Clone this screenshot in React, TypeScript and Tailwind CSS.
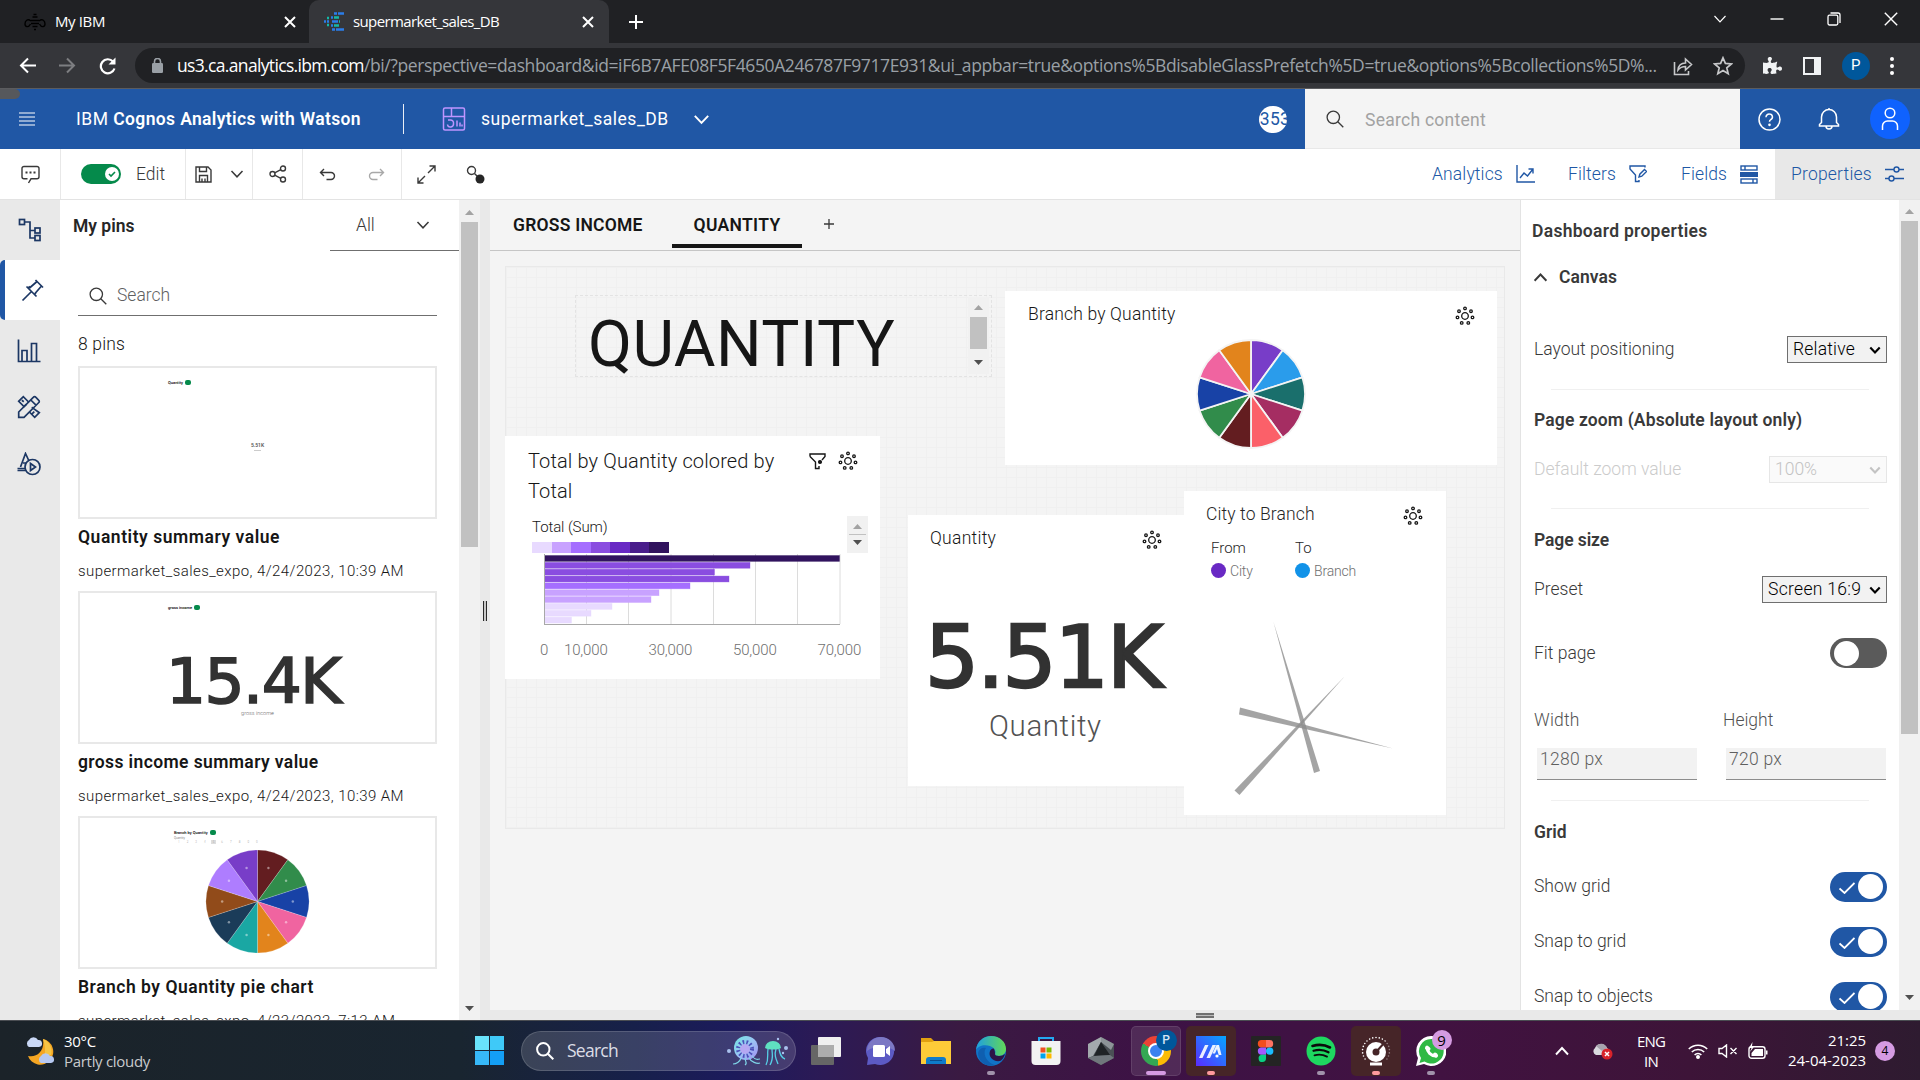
import type { ReactNode } from "react";
import { FaPuzzlePiece } from "react-icons/fa";

type IconProps = { className?: string; box?: string; children: ReactNode; w?: number };

function Icon({ className = "w-5 h-5", box = "0 0 20 20", w = 1.4, children }: IconProps) {
  return (
    <svg className={`shrink-0 ${className}`} viewBox={box} fill="none" stroke="currentColor" strokeWidth={w}>
      {children}
    </svg>
  );
}

const ChevronDown = ({ className = "w-[14px] h-[14px]", w = 1.5 }: { className?: string; w?: number }) => (
  <Icon className={className} box="0 0 14 14" w={w}><path d="M1.5 4 L7 9.8 L12.5 4" /></Icon>
);

const Magnifier = ({ className = "w-[18px] h-[18px]", w = 1.3 }: { className?: string; w?: number }) => (
  <Icon className={className} box="0 0 18 18" w={w}><circle cx="7.3" cy="7.3" r="6.2" /><path d="M11.8 11.8 L17.3 17.3" /></Icon>
);

const Arrow = ({ up = false, dark = false }: { up?: boolean; dark?: boolean }) => (
  <svg className="w-[9px] h-[5px] shrink-0" viewBox="0 0 9 5" fill={dark ? "#505050" : "#a3a3a3"}>
    <path d={up ? "M0 5 L4.5 0 L9 5Z" : "M0 0 L9 0 L4.5 5Z"} />
  </svg>
);

const RING = [[0, -7.6], [6, -4.8], [7.5, 1.4], [3.3, 6.9], [-3.3, 6.9], [-7.5, 1.4], [-6, -4.8]];
const Insights = () => (
  <Icon className="w-5 h-5 text-[#161616]" box="-10 -10 20 20" w={1.3}>
    <circle r="3.3" />
    {RING.map(([x, y]) => <circle key={`${x}${y}`} cx={x} cy={y} r="1.3" />)}
  </Icon>
);

function Pie({ colors, className, stroke, w, dots }: { colors: string[]; className: string; stroke: string; w: number; dots?: boolean }) {
  const step = (Math.PI * 2) / colors.length;
  const at = (a: number, r: number) => `${(Math.sin(a) * r).toFixed(2)} ${(-Math.cos(a) * r).toFixed(2)}`;
  return (
    <svg className={className} viewBox="-55 -55 110 110">
      {colors.map((c, i) => (
        <path key={c} d={`M0 0 L${at(i * step, 54)} A54 54 0 0 1 ${at((i + 1) * step, 54)}Z`} fill={c} stroke={stroke} strokeWidth={w} />
      ))}
      {dots && colors.map((c, i) => (
        <circle key={c} cx={Math.sin((i + 0.5) * step) * 37} cy={-Math.cos((i + 0.5) * step) * 37} r="1.3" fill="#fff" opacity=".45" />
      ))}
    </svg>
  );
}

function BrowserChrome() {
  return (
    <header className="bg-[#202124] font-['Open_Sans'] font-normal text-white">
      <div className="flex h-[43px] items-stretch">
        <div className="flex w-[309px] items-center pl-[24px] pr-[12px]">
          <Icon className="w-[22px] h-[18px] text-black" box="0 0 22 18" w={1.4}>
            <path d="M8.500 4h5M7 7.500h8M7 10.500h8M8.500 13.500h5M10 16.500h2M9.500 1.500h3" />
            <path d="M7 8 C3.500 5 1 8 1 11s3.500 4 5.500 0M15 8c3.500-3 6 0 6 3s-3.500 4-5.500 0" />
          </Icon>
          <span className="ml-[9px] text-[15px] tracking-[-0.38px]">My IBM</span>
          <Icon className="ml-auto w-[14px] h-[14px]" box="0 0 14 14" w={2}><path d="M2 2 L12 12 M12 2 L2 12" /></Icon>
        </div>
        <div className="flex w-[300px] items-center rounded-t-[10px] bg-[#35363a] pl-[15px] pr-[14px]">
          <Icon className="w-[21px] h-[19px]" box="0 0 21 19" w={2.4}>
            <path stroke="#2b7de9" d="M10 1.5h3M14 1.5h6M7 5.5h2M3 9.500h2M0 9.500h2M7 13.500h2M8 17.500h3M12 17.500h8M8 9.500h6" />
            <path stroke="#14b8a6" d="M10 5.500h5M3 6h2M3 13h2M10 13.500h5M15 9.500h1" />
          </Icon>
          <span className="ml-[8px] text-[15px] tracking-[-0.63px]">supermarket_sales_DB</span>
          <Icon className="ml-auto w-[14px] h-[14px]" box="0 0 14 14" w={2}><path d="M2 2 L12 12 M12 2 L2 12" /></Icon>
        </div>
        <div className="flex items-center pl-[19px]">
          <Icon className="w-4 h-4" box="0 0 16 16" w={2}><path d="M8 1v14M1 8h14" /></Icon>
        </div>
        <div className="ml-auto flex items-center gap-[43px] pr-[22px] pb-[6px]">
          <ChevronDown w={1.2} />
          <Icon className="w-[14px] h-[14px]" box="0 0 14 14" w={1.4}><path d="M0.500 7h13" /></Icon>
          <Icon className="w-[14px] h-[14px]" box="0 0 14 14" w={1.3}><rect x="1" y="3.200" width="9.800" height="9.800" rx="1.500" /><path d="M3.500 1h7.500a2 2 0 0 1 2 2v8" /></Icon>
          <Icon className="w-[14px] h-[14px]" box="0 0 14 14" w={1.4}><path d="M.8 .8 L13.200 13.200 M13.200 .8 L.8 13.200" /></Icon>
        </div>
      </div>
      <div className="flex h-[46px] items-center border-b border-[#5b5c5f] bg-[#35363a]">
        <div className="flex w-[135px] items-center gap-[23px] pl-[19px]">
          <Icon className="w-[17px] h-[17px]" box="0 0 17 17" w={2}><path d="M17 8.500H2M9 1.500 L2 8.500 L9 15.500" /></Icon>
          <Icon className="w-[17px] h-[17px] text-[#7d7e81]" box="0 0 17 17" w={2}><path d="M0 8.500h15M8 1.500 L15 8.500 L8 15.500" /></Icon>
          <Icon className="w-[18px] h-[18px]" box="0 0 18 18" w={2.200}><path d="M15.500 11.500A7 7 0 1 1 14 4.500" /><path d="M16.500 0.500v7h-7z" fill="#fff" stroke="none" /></Icon>
        </div>
        <div className="flex h-[35px] w-[1610px] items-center rounded-full bg-[#202124] pl-[17px] pr-[12px] text-[17.500px]">
          <svg className="h-[15px] w-[11px]" viewBox="0 0 11 15" fill="#9aa0a6"><rect y="5" width="11" height="10" rx="1.200" /><path d="M2.500 6V3.500a3 3 0 0 1 6 0V6" stroke="#9aa0a6" strokeWidth="1.600" fill="none" /></svg>
          <span className="ml-[14px] tracking-[-0.66px]">us3.ca.analytics.ibm.com</span>
          <span className="whitespace-nowrap tracking-[-0.39px] text-[#9aa0a6]">/bi/?perspective=dashboard&amp;id=iF6B7AFE08F5F4650A246787F9717E931&amp;ui_appbar=true&amp;options%5BdisableGlassPrefetch%5D=true&amp;options%5Bcollections%5D%...</span>
          <Icon className="ml-auto w-[20px] h-[20px] text-[#c7c8ca]" w={1.600}><path d="M1.500 6v12.500h14V15M5 14c.5-5 3.500-7 7.500-7V3l6 5.500-6 5.500v-3.500C9 10.500 7 11.500 5 14z" /></Icon>
          <Icon className="ml-[20px] w-[20px] h-[20px] text-[#c7c8ca]" w={1.700}><path d="M10 1.800l2.400 5.600 6 .5-4.600 4 1.400 5.900L10 14.600l-5.200 3.200 1.400-5.900-4.600-4 6-.5z" /></Icon>
        </div>
        <div className="flex flex-1 items-center justify-between pl-[18px] pr-[26px]">
          <FaPuzzlePiece className="h-[19px] w-[19px] text-[#f1f3f4]" />
          <span className="ml-[1px] h-[18px] w-[18px] border-[2.500px] border-r-[7px] border-[#f1f3f4]" />
          <span className="flex h-[28px] w-[28px] items-center justify-center rounded-full bg-[#00579b] font-['Roboto'] text-[15px]">P</span>
          <span className="flex flex-col gap-[3px]"><i className="h-1 w-1 rounded-full bg-white" /><i className="h-1 w-1 rounded-full bg-white" /><i className="h-1 w-1 rounded-full bg-white" /></span>
        </div>
      </div>
    </header>
  );
}

function AppBar() {
  return (
    <div className="flex h-[60px] items-center bg-[#2057a5] text-[17.500px] font-normal text-white">
      <div className="relative flex w-[76px] items-center self-stretch pl-[19px]">
        <span className="absolute left-0 top-0 h-[10px] w-5 rounded-r-[5px] bg-[#56585c]" />
        <Icon className="w-4 h-[14px]" box="0 0 16 14" w={1.200}><path d="M0 1h16M0 5h16M0 9h16M0 13h16" /></Icon>
      </div>
      <span className="w-[327px] whitespace-nowrap"><span className="tracking-[0.500px]">IBM </span><b className="font-semibold tracking-[0.360px]">Cognos Analytics with Watson</b></span>
      <span className="h-[30px] w-px bg-white/90" />
      <Icon className="ml-[38px] h-[24px] w-[24px] text-[#be95ff]" box="0 0 24 24" w={1.500}>
        <rect x="1.500" y="1" width="21" height="22" rx="1.500" /><path d="M1.500 9.500h21M9.500 1v8.500M6 13h2.500a3 3 0 0 1 3 3.500 3 3 0 0 1-6 1M15 19.500v-6M18 19.500v-4M20 19.500v-2" />
      </Icon>
      <span className="ml-[15px] tracking-[0.510px]">supermarket_sales_DB</span>
      <ChevronDown className="ml-[24px] h-[17px] w-[17px]" w={1.600} />
      <span className="ml-auto flex h-[27px] w-[28px] items-center justify-center overflow-hidden rounded-full bg-white tracking-[0.300px] text-[#2057a5]"><span className="ml-[4px]">353</span></span>
      <div className="ml-[18px] flex w-[435px] items-center self-stretch border-b border-[#e8e8e8] bg-[#f4f4f4] pl-[21px]">
        <Magnifier className="h-[18px] w-[18px] text-[#393939]" />
        <span className="ml-[21px] pt-[3px] tracking-[0.260px] text-[#a2a2a2]">Search content</span>
      </div>
      <div className="flex w-[180px] items-center pl-[18px]">
        <Icon className="h-[23px] w-[23px]" box="0 0 23 23" w={1.500}><circle cx="11.500" cy="11.500" r="10.500" /><path d="M8 9.200a3.200 3.200 0 0 1 3.500-3.200 3 3 0 0 1 1 5.800c-.8.400-1 .8-1 2" /><circle cx="11.500" cy="16.800" r=".6" fill="#fff" /></Icon>
        <Icon className="ml-[37px] h-[24px] w-[22px]" box="0 0 22 24" w={1.500}><path d="M11 1v2M3.500 15.500V10a7.500 7.500 0 0 1 15 0v5.500l2 2V19H1.500v-1.500zM8 19a3 3 0 0 0 6 0" /></Icon>
        <span className="ml-[30px] flex h-[40px] w-[40px] items-center justify-center rounded-full bg-[#0f62fe]">
          <Icon className="h-[24px] w-[18px]" box="0 0 18 24" w={1.500}><circle cx="9" cy="6" r="4.800" /><path d="M1.500 23v-4a5 5 0 0 1 5-5h5a5 5 0 0 1 5 5v4" /></Icon>
        </span>
      </div>
    </div>
  );
}

function Toolbar() {
  return (
    <div className="flex h-[51px] items-stretch border-b border-[#e3e3e3] bg-white text-[17.500px] text-[#393939]">
      <div className="flex w-[61px] items-center justify-center border-r border-[#e8e8e8]">
        <Icon className="h-[19px] w-[19px]" box="0 0 19 19" w={1.400}><path d="M7.500 18 L10 13.800h6a2 2 0 0 0 2-2V3.500a2 2 0 0 0-2-2H3a2 2 0 0 0-2 2v8.300a2 2 0 0 0 2 2h3.500" /><path d="M4.500 7.600h2M8.500 7.600h2M12.500 7.600h2" strokeWidth="2" /></Icon>
      </div>
      <div className="flex w-[125px] items-center border-r border-[#e8e8e8] pl-[20px]">
        <span className="flex h-[20px] w-[40px] items-center justify-end rounded-full bg-[#058a4b] pr-[2px]">
          <span className="flex h-[14px] w-[14px] items-center justify-center rounded-full bg-white"><Icon className="h-2 w-2 text-[#058a4b]" box="0 0 8 8" w={1.600}><path d="M1 4l2 2 4-4" /></Icon></span>
        </span>
        <span className="ml-[15px]">Edit</span>
      </div>
      <div className="flex w-[67px] items-center gap-[18px] border-r border-[#e8e8e8] pl-[9px]">
        <Icon className="h-[17px] w-[17px]" box="0 0 17 17"><path d="M1 1h12l3 3v12H1zM4.500 1v4.500h7V1M4.500 16v-6.500h8V16M7 12.500v3.500M10 12.500v3.500" /></Icon>
        <ChevronDown className="h-[14px] w-[14px]" />
      </div>
      <div className="flex w-[50px] items-center justify-center border-r border-[#e8e8e8]">
        <Icon className="h-[18px] w-[18px]" box="0 0 18 18"><circle cx="3.500" cy="9" r="2.500" /><circle cx="14" cy="3.500" r="2.500" /><circle cx="14" cy="14.500" r="2.500" /><path d="M5.700 7.800 L11.800 4.700M5.700 10.200 L11.800 13.300" /></Icon>
      </div>
      <div className="flex w-[99px] items-center gap-[32px] border-r border-[#e8e8e8] pl-[16px]">
        <Icon className="h-[17px] w-[17px]" box="0 0 17 17"><path d="M5 3 L1.500 6.500 L5 10M1.500 6.500H12a3.500 3.500 0 0 1 3.500 3.500 3.500 3.500 0 0 1-3.500 3.500H7.500" /></Icon>
        <Icon className="h-[17px] w-[17px] text-[#a8a8a8]" box="0 0 17 17"><path d="M12 3 L15.500 6.500 L12 10M15.500 6.500H5A3.500 3.500 0 0 0 1.500 10 3.500 3.500 0 0 0 5 13.500h4.500" /></Icon>
      </div>
      <div className="flex items-center gap-[30px] pl-[15px]">
        <Icon className="h-[19px] w-[19px]" box="0 0 19 19"><path d="M12.500 1H18v5.500M18 1 L11 8M1 12.500V18h5.500M1 18 L8 11" /></Icon>
        <Icon className="h-[19px] w-[19px]" box="0 0 19 19"><circle cx="5.500" cy="5.500" r="4" /><path d="M8.500 8.500l3 3" /><circle cx="14" cy="14" r="4.500" fill="#262626" stroke="none" /></Icon>
      </div>
      <div className="ml-auto flex items-center text-[#2057a5]">
        <span className="w-[84px] tracking-[0.130px]">Analytics</span>
        <Icon className="h-[18px] w-[19px]" box="0 0 19 18"><path d="M1 0v17h18M4 13l4-5 3.500 3 5.500-7M12.500 4H17v4.500" /></Icon>
        <span className="ml-[33px] w-[61px] tracking-[0.120px]">Filters</span>
        <Icon className="h-[18px] w-[18px]" box="0 0 18 18"><path d="M16 2.500V1H1v3l5.500 6v6.500h3.500V15M10 12l.8-2.800 4.700-4.700 2 2-4.700 4.700z" /></Icon>
        <span className="ml-[34px] w-[59px] tracking-[0.110px]">Fields</span>
        <Icon className="h-[19px] w-[18px]" box="0 0 18 19"><rect x="1" y="1" width="16" height="4" /><rect x="1" y="14" width="16" height="4" /><rect x="0" y="7" width="18" height="5" fill="currentColor" stroke="none" /><path d="M5 1v4M13 14v4" /></Icon>
        <div className="ml-[17px] flex w-[145px] items-center self-stretch bg-[#e8e8e8] pl-[16px]">
          <span className="w-[94px] tracking-[0.200px]">Properties</span>
          <Icon className="h-[18px] w-[19px]" box="0 0 19 18"><path d="M0 4.500h9M14 4.500h5M0 13.500h4M9 13.500h10" /><circle cx="11.500" cy="4.500" r="2.500" /><circle cx="6.500" cy="13.500" r="2.500" /></Icon>
        </div>
      </div>
    </div>
  );
}

function Rail() {
  return (
    <nav className="flex w-[60px] shrink-0 flex-col bg-[#e9e9e9] text-[#1c3764]">
      <div className="flex h-[60px] items-center justify-center">
        <Icon className="h-[24px] w-[24px]" box="0 0 24 24" w={1.700}><rect x="1.500" y="1.500" width="5" height="5" /><rect x="17" y="10" width="5" height="5" /><rect x="17" y="17.500" width="5" height="5" /><path d="M6.500 4H12v16h5M12 12.500h5" /></Icon>
      </div>
      <div className="flex h-[60px] items-center justify-center rounded-l-[5px] border-l-[5px] border-[#2057a5] bg-white">
        <Icon className="h-[24px] w-[24px]" box="0 0 24 24" w={1.700}><path d="M14.500 2 L22 9.500M16 3.500l-7.500 6.500M20.500 8 L14 15.500M5.500 8.500 L15.500 18.500M7 10l2-1.500M13.500 16.500l1.500-1.500M10 14 L1.500 22.500" /></Icon>
      </div>
      <div className="flex h-[61px] items-center justify-center pr-[2px]">
        <Icon className="h-[24px] w-[24px]" box="0 0 24 24" w={1.700}><path d="M1.500 0.500v22h22M5 22.500v-11h5v11M14.500 22.500V4.500h5v18" /></Icon>
      </div>
      <div className="flex h-[52px] items-center justify-center pr-[2px]">
        <Icon className="h-[24px] w-[24px]" box="0 0 24 24" w={1.700}>
          <path d="M16.500 2.200a1.500 1.500 0 0 1 2.200 0l3.100 3.100a1.500 1.500 0 0 1 0 2.200L7 22.300H1.700V17zM13.800 5l5.200 5.200" />
          <path d="M9.300 9.300L7 11.600 1.700 6.300l4.600-4.600 5.300 5.300M6.800 6.800l-2 -1.500 M14.700 12.300l.2.100 7.400 5.300-4.600 4.600-5.300-5.300M17.300 16.600l-2.200 2.200" />
        </Icon>
      </div>
      <div className="flex h-[62px] items-center justify-center pr-[2px]">
        <Icon className="h-[24px] w-[24px]" box="0 0 24 24" w={1.700}><path d="M3.500 15 L8.500 1.500 L12 9M6 11h3M0.500 18.500h9M.5 16.500h8" /><circle cx="15.500" cy="15" r="7.500" /><path d="M13.500 11.500v7l5-3.500z" /></Icon>
      </div>
    </nav>
  );
}

function Pin({ title, sub, titleClass, children }: { title: string; sub: string; titleClass: string; children: ReactNode }) {
  return (
    <div className="h-[225px] shrink-0">
      <div className="relative h-[153px] border-2 border-[#e8e8e8]">{children}</div>
      <div className={`flex h-[36px] items-center whitespace-nowrap text-[17.500px] font-semibold text-[#161616] ${titleClass}`}>{title}</div>
      <div className="flex h-[32px] items-center whitespace-nowrap text-[15px] tracking-[0.420px] text-[#161616]">{sub}</div>
    </div>
  );
}

const Live = () => <i className="h-[5px] w-[6px] rounded-[2px] bg-[#058a4b]" />;

function PinsPanel() {
  return (
    <aside className="flex w-[420px] shrink-0 overflow-hidden bg-white">
      <div className="flex w-[399px] flex-col">
        <div className="flex h-[51px] shrink-0 items-stretch justify-between pl-[13px]">
          <h2 className="flex items-center pt-px text-[17.500px] font-semibold text-[#262626]">My pins</h2>
          <div className="flex w-[129px] items-center border-b border-[#6f6f6f] pl-[26px] text-[17.500px] text-[#393939]">All<ChevronDown className="ml-[41px] h-[14px] w-[14px]" /></div>
        </div>
        <div className="ml-[18px] flex w-[359px] flex-col">
          <div className="mt-[25px] flex h-[40px] shrink-0 items-center border-b border-[#6f6f6f] pl-[11px] text-[17.500px] text-[#5f5f5f]">
            <Magnifier className="h-[18px] w-[18px] text-[#393939]" /><span className="ml-[10px]">Search</span>
          </div>
          <div className="flex h-[50px] shrink-0 items-center pt-[6px] text-[17.500px] tracking-[0.170px] text-[#161616]">8 pins</div>
          <Pin title="Quantity summary value" titleClass="tracking-[0.540px]" sub="supermarket_sales_expo, 4/24/2023, 10:39 AM">
            <div className="ml-[88px] mt-[12px] flex items-center gap-[2px] text-[4px] font-medium leading-[5px]">Quantity <Live /></div>
            <div className="mt-[56px] text-center text-[5px] font-semibold leading-[9px] text-[#555]">5.51K</div>
            <div className="mx-auto h-px w-[7px] bg-[#ccc]" />
          </Pin>
          <Pin title="gross income summary value" titleClass="tracking-[0.390px]" sub="supermarket_sales_expo, 4/24/2023, 10:39 AM">
            <div className="ml-[88px] mt-[12px] flex items-center gap-[2px] text-[4px] font-medium leading-[5px]">gross income <Live /></div>
            <div className="-ml-[9px] mt-[44px] text-center font-['DejaVu_Sans'] text-[63px] font-normal leading-[56px] tracking-[-1.500px] text-[#323232] [-webkit-text-stroke:1.700px_#323232]">15.4K</div>
            <div className="-mt-[1px] text-center text-[5.500px] leading-[8px] text-[#666]">gross income</div>
          </Pin>
          <Pin title="Branch by Quantity pie chart" titleClass="tracking-[0.510px]" sub="supermarket_sales_expo, 4/23/2023, 7:13 AM">
            <div className="ml-[94px] mt-[12px] flex items-center gap-[2px] text-[4px] font-medium leading-[5px]">Branch by Quantity <Live /></div>
            <div className="ml-[94px] mt-[1px] text-[3px] leading-[4px] text-[#555]">Quantity</div>
            <div className="ml-[98px] flex gap-[7px] text-[3px] leading-[4px] text-[#999]">{[..."1234567890"].map(n => <span key={n} className={n === "5" ? "-mx-[2px] bg-[#ddd] px-[2px]" : ""}>{n}</span>)}</div>
            <Pie className="mx-auto mt-[5px] h-[105px] w-[105px]" stroke="#ffffff55" w={0.600} dots
              colors={["#631d20", "#318c4b", "#1842a6", "#f064a0", "#e2841c", "#1aa7a3", "#1b3c59", "#914b1a", "#ae7dff", "#783dc8"]} />
          </Pin>
        </div>
      </div>
      <div className="flex w-[21px] flex-col items-center bg-[#f1f1f1] pt-[10px] pb-[9px]">
        <Arrow up />
        <span className="mt-[7px] h-[325px] w-[17px] bg-[#c1c1c1]" />
        <span className="flex-1" />
        <Arrow dark />
      </div>
    </aside>
  );
}

const BARS: [number, string][] = [[295, "#31135e"], [205.500, "#8a4de0"], [170, "#8a4de0"], [184.500, "#8a4de0"], [145.500, "#a56eff"], [114.500, "#c8a2ff"], [106.500, "#c8a2ff"], [67.500, "#e8daff"], [46.500, "#e8daff"], [27, "#e8daff"]];

function TotalCard() {
  return (
    <section className="absolute left-[15px] top-[185px] h-[243px] w-[375px] bg-white">
      <div className="flex items-start pl-[23px] pt-[10px]">
        <h3 className="w-[263px] text-[20px] leading-[30px] tracking-[0.130px] text-[#161616]">Total by Quantity colored by Total</h3>
        <Icon className="ml-[18px] mt-[7px] h-[17px] w-[17px] text-[#161616]" box="0 0 17 17"><path d="M1 3.500V1h15v2.500L13 7M1 3.500 L6.500 9v6.500h3.500V13" /><circle cx="11" cy="9" r="1.400" fill="currentColor" /></Icon>
        <span className="ml-[12px] mt-[5px]"><Insights /></span>
      </div>
      <div className="flex justify-between pl-[27px] pr-[12px]">
        <div>
          <div className="mt-[12px] h-[18px] text-[15px] leading-[18px] tracking-[-0.100px] text-[#161616]">Total (Sum)</div>
          <div className="mt-[6px] flex h-[11px] w-[137px]">
            {["#e8daff", "#c8a2ff", "#a56eff", "#8a4de0", "#6929c4", "#491d8b", "#31135e"].map(c => <i key={c} className="flex-1" style={{ backgroundColor: c }} />)}
          </div>
        </div>
        <div className="mt-[10px] flex h-[37px] w-[21px] flex-col items-center justify-between bg-[#f1f1f1] py-[8px]"><Arrow up /><i className="h-px w-[17px] bg-[#c1c1c1]" /><Arrow dark /></div>
      </div>
      <svg className="ml-[39px] mt-[1px] block h-[72px] w-[297px]" viewBox="0 0 297 72">
        {[42, 84, 126.500, 169, 211, 253, 295.500].map(x => <path key={x} d={`M${x + 0.500} 0V70`} stroke="#dcdcdc" />)}
        {BARS.map(([w, c], i) => <rect key={i} x="0.500" y={1.500 + i * 6.850} width={w} height="5.900" fill={c} stroke={c} strokeOpacity=".5" strokeWidth=".7" />)}
        <path d="M0.500 0V70M0 70.500H296" stroke="#a8a8a8" />
      </svg>
      <div className="mt-[14px] flex text-[15px] leading-[20px] tracking-[-0.150px] text-[#6f6f6f]">
        <span className="ml-[35px] w-[24px]">0</span><span className="w-[84.500px]">10,000</span><span className="w-[84.500px]">30,000</span><span className="w-[84.500px]">50,000</span><span>70,000</span>
      </div>
    </section>
  );
}

function Canvas() {
  return (
    <main className="relative flex w-[1030px] shrink-0 flex-col overflow-hidden bg-[#f4f4f4]">
      <div className="flex h-[51px] shrink-0 items-stretch border-b border-[#c6c6c6] pl-[23px] text-[17.500px] font-semibold text-[#161616]">
        <span className="flex w-[159px] items-center tracking-[0.230px]">GROSS INCOME</span>
        <span className="mb-[2px] flex w-[130px] items-center justify-center border-b-4 border-[#161616] pt-[6px] tracking-[0.330px]">QUANTITY</span>
        <Icon className="ml-[22px] mt-[19px] h-[10px] w-[10px] text-[#393939]" box="0 0 10 10" w={1.300}><path d="M5 0v10M0 5h10" /></Icon>
      </div>
      <div className="relative flex-1">
        <div className="absolute left-[15px] top-[15px] h-[563px] w-[1000px] border border-[#e9e9e9] bg-[linear-gradient(to_right,#f0f0f0_1px,transparent_1px),linear-gradient(to_bottom,#f0f0f0_1px,transparent_1px)] bg-[length:10px_10px]" />
        <div className="absolute left-[85px] top-[44px] flex h-[82px] w-[417px] justify-between overflow-hidden border border-dashed border-[#e3e3e3] pr-[2px]">
          <span className="ml-[12px] mt-[9px] text-[64px] font-normal leading-[80px] tracking-[0.500px] text-[#161616]">QUANTITY</span>
          <div className="mt-px flex h-[77px] w-[21px] flex-col items-center bg-[#f1f1f1] pt-[8px]"><Arrow up /><i className="mb-[11px] mt-[7px] h-[32px] w-[17px] bg-[#c1c1c1]" /><Arrow dark /></div>
        </div>
        <TotalCard />
        <section className="absolute left-[515px] top-[40px] h-[174px] w-[492px] bg-white">
          <div className="flex h-[50px] items-center justify-between pl-[23px] pr-[22px] text-[17.500px] tracking-[0.170px] text-[#161616]"><h3 className="-mt-[3px]">Branch by Quantity</h3><Insights /></div>
          <Pie className="mx-auto -mt-[2px] h-[110px] w-[110px]" stroke="#f4f4f4" w={1.800}
            colors={["#783dc8", "#2a9ceb", "#1a6f6c", "#a52d62", "#fb6069", "#631d20", "#318c4b", "#1842a6", "#f064a0", "#e2841c"]} />
        </section>
        <section className="absolute left-[418px] top-[264px] h-[271px] w-[276px] bg-white">
          <div className="flex h-[50px] items-center justify-between pl-[22px] pr-[22px] text-[17.500px] tracking-[0.270px] text-[#161616]"><h3 className="-mt-[3px]">Quantity</h3><Insights /></div>
          <div className="mt-[37px] pl-[17px] font-['DejaVu_Sans'] text-[85px] font-normal leading-[112px] tracking-[-1.800px] text-[#323232] [-webkit-text-stroke:2.400px_#323232]">5.51K</div>
          <div className="-mt-[8px] pl-[81px] text-[29.500px] leading-[40px] tracking-[0.600px] text-[#525252]">Quantity</div>
        </section>
        <section className="absolute left-[694px] top-[240px] h-[324px] w-[262px] bg-white">
          <div className="flex h-[50px] items-center justify-between pl-[22px] pr-[23px] text-[17.500px] tracking-[0.120px] text-[#262626]"><h3 className="-mt-[3px]">City to Branch</h3><Insights /></div>
          <div className="flex pl-[27px] text-[15px]">
            {[["From", "City", "#6929c4"], ["To", "Branch", "#1192e8"]].map(([a, b, c]) => (
              <div key={a} className="w-[84px]">
                <div className="-mt-[3px] text-[#262626] leading-[20px]">{a}</div>
                <div className="mt-[3px] flex items-center gap-[4px] text-[14px] leading-[20px] tracking-[-0.200px] text-[#6f6f6f]"><i className="-mt-[2px] h-[15px] w-[15px] rounded-full" style={{ backgroundColor: c }} />{b}</div>
              </div>
            ))}
          </div>
          <svg className="absolute left-0 top-[110px]" width="262" height="200" viewBox="1184 601 262 200" fill="#8d8d8d" fillOpacity=".8">
            <path d="M1273.500 622 L1320 771 L1314 773Z" /><path d="M1393 748.500 L1240 707.500 L1239 714.500Z" /><path d="M1344.500 676.500 L1239.500 795 L1234.500 790.500Z" />
          </svg>
        </section>
      </div>
    </main>
  );
}

function Select({ value, className, disabled }: { value: string; className: string; disabled?: boolean }) {
  return (
    <span className={`flex h-[27px] items-center justify-between border pl-[5px] pr-[5px] ${disabled ? "border-[#e6e6e6] bg-[#fafafa] text-[#c3c3c3]" : "border-[#6f6f6f] bg-[#f2f2f2] text-black"} ${className}`}>
      {value}<ChevronDown className="h-3 w-3" w={2.500} />
    </span>
  );
}

function Toggle({ on }: { on?: boolean }) {
  return (
    <span className={`flex h-[30px] w-[57px] items-center rounded-full ${on ? "justify-end bg-[#2057a5] pr-[4px]" : "bg-[#5a5a5a] pl-[4px]"}`}>
      {on && <Icon className="mr-[3px] mt-[3px] h-[12px] w-[16px] text-white" box="0 0 16 12" w={1.800}><path d="M0.500 6.500 L5.500 11 L15.500 1" /></Icon>}
      <i className="h-[25px] w-[25px] rounded-full bg-white" />
    </span>
  );
}

const Rule = ({ className }: { className: string }) => <div className={`ml-[17px] mr-[18px] h-px shrink-0 bg-[#f0f0f0] ${className}`} />;
const row = "flex shrink-0 items-center justify-between";

function Properties() {
  return (
    <aside className="flex flex-1 overflow-hidden border-l border-[#e3e3e3] bg-white">
      <div className="flex w-[378px] flex-col pl-[13px] pr-[12px] text-[17.500px] text-[#393939]">
        <h2 className="-ml-[2px] flex h-[62px] shrink-0 items-center font-semibold tracking-[0.290px]">Dashboard properties</h2>
        <div className="flex h-[30px] shrink-0 items-center font-semibold tracking-[0.060px]"><ChevronDown className="-ml-[1px] mr-[11px] h-[15px] w-[15px] rotate-180" w={1.800} />Canvas</div>
        <div className={`${row} mt-[29px] h-[57px]`}>Layout positioning<Select value="Relative" className="w-[100px] tracking-[0.190px]" /></div>
        <Rule className="mt-[11px]" />
        <h3 className="flex h-[60px] shrink-0 items-center font-semibold tracking-[0.130px]">Page zoom (Absolute layout only)</h3>
        <div className={`${row} h-[39px] text-[#cbcbcb]`}>Default zoom value<Select value="100%" disabled className="w-[118px]" /></div>
        <Rule className="mt-[19px]" />
        <h3 className="flex h-[62px] shrink-0 items-center font-semibold tracking-[-0.100px]">Page size</h3>
        <div className={`${row} h-[37px]`}>Preset<Select value="Screen 16:9" className="w-[125px] tracking-[0.310px]" /></div>
        <div className={`${row} h-[90px]`}>Fit page<Toggle /></div>
        <div className="flex h-[44px] shrink-0 items-center text-[#525252]"><span className="w-[189px] tracking-[0.200px]">Width</span><span>Height</span></div>
        <div className="mt-[6px] flex h-[32px] shrink-0 gap-[29px] pl-[3px] leading-[22px] tracking-[0.280px] text-[#5f5f5f]">
          <span className="w-[160px] border-b border-[#8d8d8d] bg-[#f2f2f2] pl-[3px]">1280 px</span>
          <span className="w-[160px] border-b border-[#8d8d8d] bg-[#f2f2f2] pl-[3px]">720 px</span>
        </div>
        <Rule className="mt-[20px]" />
        <h3 className="flex h-[58px] shrink-0 items-center pt-[4px] font-semibold">Grid</h3>
        {["Show grid", "Snap to grid", "Snap to objects"].map(t => <div key={t} className={`${row} h-[55px]`}>{t}<Toggle on /></div>)}
      </div>
      <div className="flex w-[21px] flex-col items-center bg-[#f1f1f1] pb-[10px] pt-[9px]">
        <Arrow up /><span className="mt-[7px] h-[513px] w-[17px] bg-[#c1c1c1]" /><span className="flex-1" /><Arrow dark />
      </div>
    </aside>
  );
}

function Slot({ children, mark, tile }: { children: ReactNode; mark?: string; tile?: string }) {
  return (
    <div className="relative flex w-[55px] items-center justify-center">
      <div className={`flex h-[50px] w-[50px] items-center justify-center rounded-[5px] ${tile ?? ""}`}>{children}</div>
      {mark && <i className={`absolute bottom-px h-[4px] rounded-full ${mark}`} />}
    </div>
  );
}

const DIAL = Array.from({ length: 19 }, (_, i) => ((i - 9) * 14 * Math.PI) / 180);

function Taskbar() {
  return (
    <footer className="flex h-[60px] shrink-0 items-center border-t border-[#4a4d52] bg-[linear-gradient(to_right,#1b2329_0%,#192530_24%,#17204a_33%,#1c1b5c_38%,#2c1a55_43%,#3a1a42_50%,#3d1245_60%,#411241_75%,#3d1438_88%,#2e1b30_100%)] font-['Open_Sans'] text-[15px] font-normal text-white">
      <div className="flex w-[462px] items-center pl-[25px]">
        <svg className="h-[30px] w-[30px]" viewBox="0 0 30 30">
          <path d="M18 3a13 13 0 1 1-15 17c9 2 17-5 15-17z" fill="#f5a623" /><path d="M18 3a13 13 0 0 1 8 16l-7 2c2-6 1-12-1-18z" fill="#f6c445" />
          <path d="M4 11a4 4 0 0 1 0-7 5 5 0 0 1 9 0 3.500 3.500 0 0 1 1 7z" fill="#c9d8f6" /><path d="M16 27a4 4 0 0 1 0-7 5 5 0 0 1 9 0 3.500 3.500 0 0 1 1 7z" fill="#b7c9f2" />
        </svg>
        <div className="ml-[9px] leading-[20px]"><div className="tracking-[-0.300px]">30°C</div><div className="tracking-[-0.300px] text-[#c9cbcd]">Partly cloudy</div></div>
      </div>
      <Slot>
        <span className="grid h-[29px] w-[29px] grid-cols-2 gap-px"><i className="bg-[#69e3fb]" /><i className="bg-[#3fc9f8]" /><i className="bg-[#37b8f8]" /><i className="bg-[#149ff5]" /></span>
      </Slot>
      <div className="ml-[4px] flex h-[40px] w-[275px] items-center rounded-full border border-white/15 bg-white/15 pl-[14px] pr-[6px] text-[17.500px] text-[#dcdde6]">
        <Magnifier className="h-[18px] w-[18px] text-white" w={2} />
        <span className="ml-[13px] tracking-[-0.740px]">Search</span>
        <svg className="ml-auto h-[30px] w-[62px]" viewBox="0 0 62 30" fill="none">
          <defs><linearGradient id="bell" x1="0" y1="0" x2="1" y2="1"><stop offset="0" stopColor="#6ee7e0" /><stop offset=".5" stopColor="#9cc4f5" /><stop offset="1" stopColor="#a08cf0" /></linearGradient></defs>
          <circle cx="19" cy="12" r="12" fill="url(#bell)" /><circle cx="18" cy="13" r="5" fill="#b5a8f2" /><circle cx="18" cy="13" r="7" stroke="#4c50b8" strokeWidth="4" strokeDasharray="1.600 2.200" /><path d="M14 22c-1 4-5 6-8 6M18 22c0 4 3 5 0 7M22 22c2 4 8 6 11 5M25 20c4 5 5 3 8 3" stroke="#7fd6e8" strokeWidth="1.200" />
          <path d="M38 12a8 7 0 0 1 16 0c-3 2-12 2-16 0z" fill="#5fe0c0" /><path d="M41 13c-1 6 1 10-2 16M45 13c0 6 2 9-2 16M49 13c-2 6 0 10 2 15M52 13c1 5 2 9 6 10" stroke="#56cfe6" strokeWidth="1.300" />
          <circle cx="2" cy="15" r="2" fill="#a9c1ee" /><circle cx="59" cy="12" r="2" fill="#a9c1ee" /><circle cx="51" cy="3" r="1.200" fill="#a9c1ee" /><circle cx="56" cy="17" r="1.200" fill="#a9c1ee" />
        </svg>
      </div>
      <span className="w-[2px]" />
      <Slot><svg className="h-[30px] w-[30px]" viewBox="0 0 30 30"><rect x="7" y="1" width="23" height="20" rx="1" fill="#f0f0f0" /><rect x="0" y="9" width="23" height="20" rx="1" fill="#666" /><rect x="7" y="9" width="16" height="12" fill="#adadad" /></svg></Slot>
      <Slot><svg className="h-[30px] w-[30px]" viewBox="0 0 30 30"><path d="M15 1a14 14 0 1 1-6 27L1 29l1-7A14 14 0 0 1 15 1z" fill="#5c5ac4" /><path d="M15 1A14 14 0 0 1 29 15c-6-5-20-6-28 0A14 14 0 0 1 15 1z" fill="#7c78c4" /><rect x="7" y="9" width="12" height="12" rx="1.500" fill="#fff" /><path d="M20 13l4-3v10l-4-3z" fill="#fff" /></svg></Slot>
      <Slot><svg className="h-[30px] w-[30px]" viewBox="0 0 30 30"><path d="M0 2h10l3 3v8H0z" fill="#e0a010" /><path d="M0 6h11l2-1h17v23H0z" fill="#fdcb38" /><path d="M5 28v-4a3 3 0 0 1 3-3h14a3 3 0 0 1 3 3v4z" fill="#0f7ccb" /><path d="M9 24.500h12" stroke="#0a4f8f" /></svg></Slot>
      <Slot mark="w-[8px] bg-[#a193ab]">
        <svg className="h-[30px] w-[30px]" viewBox="0 0 30 30"><defs><linearGradient id="edgeTop" x1="0" x2="1"><stop offset="0" stopColor="#1f9fe0" /><stop offset="1" stopColor="#62d957" /></linearGradient></defs>
          <circle cx="15" cy="15" r="15" fill="#1173c7" /><path d="M0 14C1 5 8 0 15 0c9 0 15 6 15 13 0 4-3 7-7 7-3 0-4-1-4-2 1-1 1-6-5-8C8 8 2 10 0 14z" fill="url(#edgeTop)" /><path d="M19 18c0 1 1 2 4 2s4-1 6-2c-1 4-4 7-5 7-7 1-12-4-10-10 1-2 3-3 4-2 1 2 1 4 1 5z" fill="#2d1448" /><path d="M10 12c-4 6 1 15 9 17-9 3-17-4-17-12 1-4 4-6 8-5z" fill="#0f5fb0" /></svg>
      </Slot>
      <Slot><svg className="h-[30px] w-[30px]" viewBox="0 0 30 30"><path d="M8 6V2h14v4" fill="none" stroke="#23a8f0" strokeWidth="2" /><path d="M.5 5h29v20a4 4 0 0 1-4 4h-21a4 4 0 0 1-4-4z" fill="#f3f3f3" /><rect x="9.500" y="11.500" width="5" height="5" fill="#f25022" /><rect x="15.500" y="11.500" width="5" height="5" fill="#7fba00" /><rect x="9.500" y="17.500" width="5" height="5" fill="#00a4ef" /><rect x="15.500" y="17.500" width="5" height="5" fill="#ffb900" /></svg></Slot>
      <Slot><svg className="h-[30px] w-[30px]" viewBox="0 0 30 30"><path d="M15 1l13 7v14l-13 7-13-7V8z" fill="#4a5055" /><path d="M15 1l13 7-3 6-10-8z" fill="#8d9498" /><path d="M2 8l13-7v5L7 20l-5 2z" fill="#a3a9ad" /><path d="M15 6l9 13-16 1z" fill="#1f2326" /><path d="M2 22l6-2 16-1 4 3-13 7z" fill="#70777c" /></svg></Slot>
      <Slot mark="w-[20px] bg-[#d59be2]" tile="bg-white/10 border border-white/10">
        <div className="relative h-[30px] w-[30px] rounded-full bg-[conic-gradient(from_-60deg,#ea4335_0_33.3%,#fbbc05_33.3%_64%,#34a853_64%_100%)]">
          <i className="absolute left-[7px] top-[7px] h-[16px] w-[16px] rounded-full border-2 border-white bg-[#3b82f0]" />
          <span className="absolute -top-[6px] left-[15px] flex h-[21px] w-[21px] items-center justify-center rounded-full bg-[#00579b] font-['Roboto'] text-[12px] font-medium text-[#d6e6f5]">P</span>
        </div>
      </Slot>
      <Slot mark="w-[8px] bg-[#ff9a9d]" tile="bg-[#462528]">
        <svg className="h-[30px] w-[30px]" viewBox="0 0 30 30"><defs><linearGradient id="asus" x1="0" y1="1" x2="1" y2="0"><stop offset="0" stopColor="#5a2bff" /><stop offset="1" stopColor="#05a6ff" /></linearGradient></defs><rect width="30" height="30" fill="url(#asus)" /><path d="M3 22l6-13h3.500L6.500 22zM10.500 22l6-13H20l-6 13zM20.500 9H23l2.500 10h-2.800L21 13l-2 4.500h-2.500z" fill="#fff" fillOpacity=".9" /><circle cx="21" cy="20" r="1.600" fill="#fff" /></svg>
      </Slot>
      <Slot><svg className="h-[30px] w-[30px]" viewBox="0 0 30 30"><rect width="30" height="30" rx="1" fill="#242424" /><path d="M15 4h-4.500a3.700 3.700 0 0 0 0 7.400H15z" fill="#f24e1e" /><path d="M15 4h3.500a3.700 3.700 0 0 1 0 7.400H15z" fill="#ff7262" /><path d="M15 11.400h-4.500a3.700 3.700 0 0 0 0 7.400H15z" fill="#a259ff" /><circle cx="18.700" cy="15.100" r="3.700" fill="#1abcfe" /><path d="M15 18.800h-4.500a3.700 3.700 0 1 0 4.500 3.700z" fill="#0acf83" /></svg></Slot>
      <Slot mark="w-[8px] bg-[#a193ab]"><svg className="h-[30px] w-[30px]" viewBox="0 0 30 30" fill="none" stroke="#0b0b0b" strokeLinecap="round"><circle cx="15" cy="15" r="14.500" fill="#1ed760" stroke="none" /><path d="M6.500 10c6-1.800 12.500-1.200 17.500 1.500" strokeWidth="2.600" /><path d="M7.500 14.800c5-1.500 10.500-1 15 1.500" strokeWidth="2.200" /><path d="M8.500 19.300c4-1.200 8.500-.8 12.500 1.300" strokeWidth="1.900" /></svg></Slot>
      <Slot mark="w-[8px] bg-[#ff9a9d]" tile="bg-[#462528]">
        <svg className="h-[30px] w-[30px]" viewBox="-15 -15 30 30"><circle cy="1" r="10" fill="#fff" />{DIAL.map(a => <circle key={a} cx={Math.sin(a) * 13.500} cy={-Math.cos(a) * 13.500} r=".8" fill="#fff" opacity={a > 0.9 ? 0.4 : 1} />)}<circle cy="1" r="3.500" fill="#462528" /><path d="M1 0 L9 -9" stroke="#462528" strokeWidth="2" /><path d="M-6 13h12" stroke="#fff" strokeWidth="3" /></svg>
      </Slot>
      <Slot mark="w-[8px] bg-[#a193ab]">
        <div className="relative flex h-[30px] w-[30px] items-center justify-center">
          <svg className="absolute inset-0" viewBox="0 0 30 30"><path d="M15 0a15 15 0 1 1-7 28L0 30l2-8A15 15 0 0 1 15 0z" fill="#fff" /><path d="M15.500 3a12.300 12.300 0 1 1-7 22.500L3.500 27l1.500-5A12.300 12.300 0 0 1 15.500 3z" fill="#2fb944" /></svg>
          <svg className="absolute left-[8px] top-[8px] h-[15px] w-[15px]" viewBox="0 0 15 15" fill="none" stroke="#fff" strokeWidth="3" strokeLinecap="round"><path d="M3 3c0 5 4 9 9 9" /><path d="M3 4l1.500 1M11 10.500l1 1" strokeWidth="4" /></svg>
          <span className="absolute -top-[6px] left-[16px] flex h-[20px] w-[20px] items-center justify-center rounded-full bg-[#d59be2] text-[15px] leading-[20px] text-black">9</span>
        </div>
      </Slot>
      <div className="ml-auto flex items-center">
        <Icon className="h-[10px] w-[14px]" box="0 0 14 10" w={1.900}><path d="M1 8.500 L7 2 L13 8.500" /></Icon>
        <svg className="ml-[23px] h-[20px] w-[21px]" viewBox="0 0 21 20"><path d="M4 14a4 4 0 0 1-1-7 6.500 6.500 0 0 1 12 0 4 4 0 0 1 1 7z" fill="#d9d9de" /><path d="M4 5a6.500 6.500 0 0 1 11 2l-5 3z" fill="#a7a3ad" /><circle cx="15" cy="13" r="5.500" fill="#d8232a" /><path d="M13 11l4 4M17 11l-4 4" stroke="#fff" strokeWidth="1.500" /></svg>
        <div className="ml-[22px] w-[32px] text-center leading-[20px] tracking-[-0.840px]">ENG<br />IN</div>
        <Icon className="ml-[21px] h-[16px] w-[20px]" box="0 0 20 16" w={1.600}><path d="M.8 6a13 13 0 0 1 18.400 0M3.800 9a9 9 0 0 1 12.400 0M6.600 12a5 5 0 0 1 6.800 0" /><circle cx="10" cy="14" r="1.200" fill="#fff" /></Icon>
        <Icon className="ml-[10px] h-[14px] w-[20px]" box="0 0 20 14" w={1.400}><path d="M1 4.500h3L8.500 1v12L4 9.500H1zM12.500 4l6 6M18.500 4l-6 6" /></Icon>
        <svg className="ml-[10px] h-[18px] w-[20px]" viewBox="0 0 20 18"><rect x="1" y="4.800" width="16" height="11.500" rx="2.500" fill="none" stroke="#fff" strokeWidth="1.400" /><path d="M7 7h8v7H3.500v-3z" fill="#fff" /><path d="M18 8.500h1.500v4H18z" fill="#fff" /><path d="M4.500 0 L1 6h2.500L2 10l4.500-6H4z" fill="#fff" /></svg>
        <div className="ml-[19px] w-[79px] -mt-[2px] text-right leading-[20px] tracking-[-0.030px]">21:25<br />24-04-2023</div>
        <span className="ml-[9px] mr-[25px] flex h-[20px] w-[20px] items-center justify-center rounded-full bg-[#d59be2] text-[12px] text-black">4</span>
      </div>
    </footer>
  );
}

export default function App() {
  return (
    <div className="flex h-[1080px] w-[1920px] flex-col overflow-hidden bg-white font-['Roboto',sans-serif] font-[350]">
      <BrowserChrome />
      <AppBar />
      <Toolbar />
      <div className="flex h-[820px] shrink-0">
        <Rail />
        <PinsPanel />
        <div className="flex flex-1 flex-col bg-[#e9e9e9]">
          <div className="flex h-[810px]">
            <div className="flex w-[10px] shrink-0 items-start justify-center pt-[401px]"><i className="h-[20px] w-[4px] border-x border-[#262626] bg-[#c6c6c6]" /></div>
            <Canvas />
            <Properties />
          </div>
          <div className="flex justify-center pl-[10px] pt-[3px]"><i className="h-[5px] w-[18px] border-y-2 border-[#6f6f6f] bg-[#bbb]" /></div>
        </div>
      </div>
      <Taskbar />
    </div>
  );
}
